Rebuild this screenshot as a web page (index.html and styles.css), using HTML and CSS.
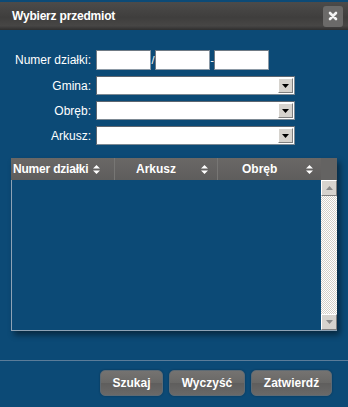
FILE: index.html
```html
<!DOCTYPE html>
<html lang="pl">

<head>
    <meta charset="UTF-8">
    <title>Wybierz przedmiot</title>
    <link rel="stylesheet" href="styles.css">
</head>

<body>
    <div class="dialog">
        <div class="titlebar">
            <span class="title">Wybierz przedmiot</span>
            <div class="close">
                <svg width="10" height="10" viewBox="0 0 10 10">
                    <path d="M2 2 L8 8 M8 2 L2 8" stroke="#f2f2f2" stroke-width="2.6" stroke-linecap="round" />
                </svg>
            </div>
        </div>

        <div class="form">
            <div class="row">
                <label>Numer działki:</label>
                <div class="parcel">
                    <input type="text" class="txt">
                    <span class="sep">/</span>
                    <input type="text" class="txt">
                    <span class="sep">-</span>
                    <input type="text" class="txt">
                </div>
            </div>
            <div class="row">
                <label>Gmina:</label>
                <div class="select"><span class="value"></span><span class="arrow"><svg width="7" height="4" viewBox="0 0 7 4"><path d="M0 0 H7 L3.5 4 Z" fill="#000" /></svg></span></div>
            </div>
            <div class="row">
                <label>Obręb:</label>
                <div class="select"><span class="value"></span><span class="arrow"><svg width="7" height="4" viewBox="0 0 7 4"><path d="M0 0 H7 L3.5 4 Z" fill="#000" /></svg></span></div>
            </div>
            <div class="row">
                <label>Arkusz:</label>
                <div class="select"><span class="value"></span><span class="arrow"><svg width="7" height="4" viewBox="0 0 7 4"><path d="M0 0 H7 L3.5 4 Z" fill="#000" /></svg></span></div>
            </div>
        </div>

        <div class="grid">
            <div class="grid-head">
                <div class="col col-num">Numer działki <svg class="sort" width="7" height="9" viewBox="0 0 7 9"><path d="M0 3.5 L3.5 0 L7 3.5 Z M0 5.5 L3.5 9 L7 5.5 Z" fill="#fff" /></svg></div>
                <div class="col col-ark"><span>Arkusz</span> <svg class="sort" width="7" height="9" viewBox="0 0 7 9"><path d="M0 3.5 L3.5 0 L7 3.5 Z M0 5.5 L3.5 9 L7 5.5 Z" fill="#fff" /></svg></div>
                <div class="col col-obr"><span>Obręb</span> <svg class="sort" width="7" height="9" viewBox="0 0 7 9"><path d="M0 3.5 L3.5 0 L7 3.5 Z M0 5.5 L3.5 9 L7 5.5 Z" fill="#fff" /></svg></div>
                <div class="col-pad"></div>
            </div>
            <div class="grid-body">
                <div class="rows"></div>
                <div class="scrollbar">
                    <div class="sb-btn"><svg width="7" height="4" viewBox="0 0 7 4"><path d="M0 4 H7 L3.5 0 Z" fill="#888" /></svg></div>
                    <div class="sb-track"></div>
                    <div class="sb-btn"><svg width="7" height="4" viewBox="0 0 7 4"><path d="M0 0 H7 L3.5 4 Z" fill="#888" /></svg></div>
                </div>
            </div>
        </div>

        <div class="footer">
            <button class="btn btn-szukaj">Szukaj</button>
            <button class="btn btn-wyczysc">Wyczyść</button>
            <button class="btn btn-zatw">Zatwierdź</button>
        </div>
    </div>
</body>

</html>
```

FILE: styles.css
```css
/* okno wyboru przedmiotu */
body {
    margin: 0;
    background-color: #0c4a76;
    font-family: "Liberation Sans", Arial, sans-serif;
    font-size: 12px;
    color: #ffffff;
}

.dialog {
    width: 348px;
    height: 407px;
    padding-top: 2px;
    box-sizing: border-box;
    background-color: #0c4a76;
}

.titlebar {
    height: 28px;
    display: flex;
    align-items: center;
    justify-content: space-between;
    padding: 0 5px 0 12px;
    background: linear-gradient(#4c4b4a, #3f3e3d 55%, #474645 85%, #2e2e2e);
}

.title {
    font-weight: bold;
    font-size: 12px;
    letter-spacing: -0.2px;
}

.close {
    width: 20px;
    height: 21px;
    display: flex;
    align-items: center;
    justify-content: center;
    background-color: #6b6a69;
    border-radius: 3px;
}

.form {
    margin-top: 20px;
    display: flex;
    flex-direction: column;
    gap: 6px;
}

.row {
    display: flex;
    align-items: center;
}

.row label {
    width: 91px;
    text-align: right;
    margin-right: 5px;
    font-size: 12px;
}

.parcel {
    display: flex;
    align-items: center;
}

.txt {
    width: 55px;
    height: 20px;
    box-sizing: border-box;
    margin: 0;
    padding: 0;
    border: 1px solid #8c9aa6;
    border-top-color: #6f7a84;
    border-left-color: #6f7a84;
    background-color: #ffffff;
}

.sep {
    width: 4px;
    text-align: center;
    font-size: 11px;
    color: #ffffff;
}

.select {
    width: 199px;
    height: 19px;
    box-sizing: border-box;
    display: flex;
    border: 1px solid #7c8993;
    border-top-color: #5d6670;
    border-left-color: #5d6670;
    background-color: #ffffff;
    padding: 1px;
}

.select .value {
    flex: 1;
}

.select .arrow {
    width: 15px;
    display: flex;
    align-items: center;
    justify-content: center;
    background-color: #d6d3ce;
    border: 1px solid #ffffff;
    border-right-color: #808080;
    border-bottom-color: #808080;
    box-sizing: border-box;
}

.grid {
    margin: 13px 0 0 11px;
    width: 326px;
    box-shadow: 3px 4px 6px rgba(0, 0, 0, 0.45);
}

.grid-head {
    height: 22px;
    display: flex;
    background: linear-gradient(#6a6866, #5e5d5c);
    font-weight: bold;
    font-size: 12px;
}

.col {
    display: flex;
    align-items: center;
    border-right: 1px solid #777674;
    box-sizing: border-box;
}

.col-num {
    width: 104px;
    padding-left: 2px;
    letter-spacing: -0.2px;
}

.col-ark {
    width: 103px;
    justify-content: space-between;
    padding: 0 9px 0 21px;
}

.col-obr {
    width: 103px;
    justify-content: space-between;
    padding: 0 8px 0 24px;
    border-right: none;
}

.col-num .sort {
    margin-left: 5px;
}

.col-pad {
    flex: 1;
    background-color: #646362;
}

.grid-body {
    height: 150px;
    display: flex;
    border-left: 1px solid #8ea3b6;
    border-bottom: 1px solid #8ea3b6;
}

.rows {
    flex: 1;
}

.scrollbar {
    width: 16px;
    display: flex;
    flex-direction: column;
    background-color: #ffffff;
    background-image: repeating-conic-gradient(#d4d0c8 0 25%, #ffffff 0 50%);
    background-size: 2px 2px;
}

.sb-btn {
    height: 16px;
    display: flex;
    align-items: center;
    justify-content: center;
    background-color: #d6d3ce;
    border: 1px solid #ffffff;
    border-right-color: #808080;
    border-bottom-color: #808080;
    box-sizing: border-box;
}

.sb-track {
    flex: 1;
}

.footer {
    margin-top: 29px;
    border-top: 1px solid #5b7c99;
    display: flex;
    justify-content: flex-end;
    gap: 6px;
    padding: 9px 16px 0 0;
}

.btn {
    height: 26px;
    padding: 0;
    border: 1px solid #5d6a74;
    border-radius: 5px;
    background: linear-gradient(#757371, #696866 50%, #5f5e5d 52%, #6a6968);
    color: #ffffff;
    font-family: "Liberation Sans", Arial, sans-serif;
    font-weight: bold;
    font-size: 12px;
    box-shadow: 0 0 2px rgba(0, 0, 0, 0.35);
}

.btn-szukaj {
    width: 63px;
}

.btn-wyczysc {
    width: 76px;
}

.btn-zatw {
    width: 81px;
}
```
